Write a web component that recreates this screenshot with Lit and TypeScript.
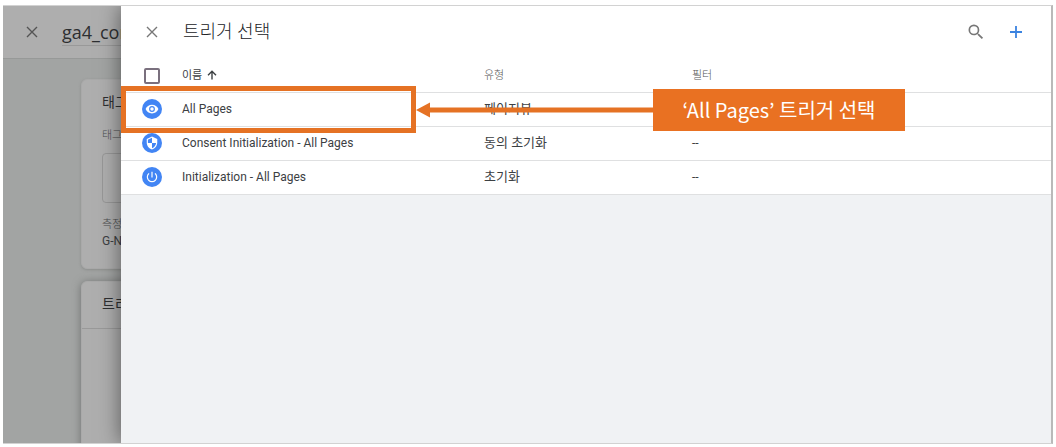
import { LitElement, html, css, svg } from "lit";
import { customElement } from "lit/decorators.js";

interface Trigger {
  name: string;
  type: string;
  filter: string;
  icon: "eye" | "shield" | "power";
}

const TRIGGERS: Trigger[] = [
  { name: "All Pages", type: "페이지뷰", filter: "", icon: "eye" },
  { name: "Consent Initialization - All Pages", type: "동의 초기화", filter: "--", icon: "shield" },
  { name: "Initialization - All Pages", type: "초기화", filter: "--", icon: "power" },
];

const PATHS = {
  eye: svg`<path fill-rule="evenodd" d="M12 4.5C7 4.5 2.7 7.6 1 12c1.7 4.400 6 7.500 11 7.500s9.300-3.100 11-7.500c-1.700-4.400-6-7.500-11-7.500zM12 17a5 5 0 1 1 0-10 5 5 0 0 1 0 10zm0-8a3 3 0 1 0 0 6 3 3 0 0 0 0-6z"/>`,
  shield: svg`<path fill-rule="evenodd" d="M12 1 3 5v6c0 5.550 3.840 10.740 9 12 5.160-1.260 9-6.450 9-12V5l-9-4zm0 10.990h7c-.530 4.120-3.280 7.790-7 8.940V12H5V6.300l7-3.110v8.800z"/>`,
  power: svg`<path d="M13 3h-2v10h2V3zm4.830 2.170-1.420 1.420A6.920 6.920 0 0 1 19 12a7 7 0 1 1-11.420-5.420L6.170 5.170A8.932 8.932 0 0 0 3 12a9 9 0 0 0 18 0c0-2.740-1.230-5.180-3.170-6.830z"/>`,
};

const closeIcon = html`<svg class="close-icon" viewBox="0 0 12 12" aria-hidden="true">
  <path d="M1 1 11 11M11 1 1 11" fill="none" stroke="currentColor" stroke-width="1.400" />
</svg>`;

@customElement("app-root")
export class AppRoot extends LitElement {
  static styles = css`
    :host {
      display: block;
      box-sizing: border-box;
      height: 100vh;
      padding: 5px 3px 3px;
      background: #fff;
      color: #3c4043;
      font-family: Roboto, "Noto Sans CJK KR", sans-serif;
      font-size: 12px;
      line-height: 16px;
    }
    *,
    *::before {
      box-sizing: border-box;
    }
    button {
      display: grid;
      place-items: center;
      width: 24px;
      height: 24px;
      padding: 0;
      border: 0;
      background: none;
      color: #777;
      cursor: pointer;
    }
    .close-icon {
      width: 12px;
      height: 12px;
    }
    .frame {
      position: relative;
      height: 100%;
      overflow: hidden;
      border: 1px solid #d2d2d2;
      border-left: 0;
      border-right: 2px solid #b9b9b9;
      background: #a2a4a3;
    }
    .editor-bar {
      display: flex;
      align-items: center;
      gap: 18px;
      height: 53px;
      padding: 0 17px;
      border-bottom: 1px solid #979998;
      background: #aeaeae;
    }
    .editor-bar button {
      color: #545454;
    }
    .tag-name {
      flex: 1;
      height: 28px;
      padding: 0;
      border: 0;
      border-bottom: 1px solid #999;
      background: none;
      color: #2d2f31;
      font: 18px/24px "Open Sans", sans-serif;
    }
    .cards {
      display: flex;
      flex-direction: column;
      gap: 12px;
      padding: 20px 78px 0;
    }
    .card {
      border: 1px solid #a9a9a9;
      border-radius: 6px;
      background: #aeaeae;
      box-shadow: 0 1px 3px #8b8d8c;
    }
    .tag-card {
      height: 190px;
      padding: 12px 20px;
    }
    .trigger-card {
      height: 240px;
      box-shadow: 0 1px 8px #6f7170;
    }
    .card-title {
      margin: 0;
      font-size: 14px;
      line-height: 20px;
      font-weight: 400;
      color: #2d2f31;
    }
    .trigger-card .card-title {
      padding: 12px 20px 14px;
      border-bottom: 1px solid #999;
    }
    .label {
      font-size: 11px;
      font-weight: 300;
      color: #4b4d4e;
    }
    .tag-card .card-title + .label {
      margin-top: 16px;
    }
    .type-box {
      height: 50px;
      margin: 9px 0 14px;
      border: 1px solid #979797;
      border-radius: 4px;
    }
    .drawer {
      position: absolute;
      inset: 0 0 0 118px;
      background: #f0f2f4;
      box-shadow: 0 0 20px rgba(0, 0, 0, 0.5);
    }
    .drawer-bar {
      display: flex;
      align-items: center;
      gap: 16px;
      height: 52px;
      padding: 0 23px 0 19px;
      background: #fff;
    }
    .drawer-title {
      flex: 1;
      margin: 0 0 0 3px;
      font-size: 18px;
      line-height: 24px;
      font-weight: 300;
      color: #202124;
    }
    .bar-icon {
      width: 20px;
      height: 20px;
    }
    .add {
      color: #3b83e0;
    }
    .list {
      position: relative;
    }
    table {
      width: 100%;
      table-layout: fixed;
      border-collapse: separate;
      border-spacing: 0;
      background: #fff;
    }
    th,
    td {
      height: 34px;
      padding: 0 0 2px;
      border-bottom: 1px solid #dfe0e1;
      text-align: left;
      font-weight: 400;
      white-space: nowrap;
    }
    th {
      height: 35px;
      padding: 2px 0 0;
      font-size: 11px;
      font-weight: 300;
      color: #555;
    }
    th.sorted {
      font-weight: 400;
      color: #3c4043;
    }
    .col-icon {
      width: 61px;
    }
    .col-name {
      width: 302px;
    }
    .col-type {
      width: 208px;
    }
    .pick {
      padding-left: 21px;
    }
    .pick input {
      appearance: none;
      display: block;
      width: 16px;
      height: 16px;
      margin: 0 0 0 2px;
      border: 2px solid #7a707e;
      border-radius: 2px;
      background: #fff;
    }
    .sort {
      width: 10px;
      height: 10px;
      margin-left: 5px;
      vertical-align: -1px;
    }
    .type {
      font-size: 13px;
    }
    .badge {
      display: grid;
      place-items: center;
      width: 20px;
      height: 20px;
      border-radius: 50%;
      background: #4285f4;
    }
    .badge svg {
      width: 14px;
      height: 14px;
      fill: #fff;
    }
    .note {
      position: absolute;
      top: 28px;
      left: 0;
      display: flex;
      align-items: center;
      pointer-events: none;
    }
    .highlight {
      width: 295px;
      height: 47px;
      border: 5px solid #e57224;
    }
    .arrow {
      display: block;
      width: 237px;
      height: 16px;
      fill: #e57224;
    }
    .callout {
      width: 252px;
      background: #e97122;
      color: #fff;
      font: 400 20px/42px "Noto Sans CJK KR", sans-serif;
      text-align: center;
      white-space: nowrap;
    }
  `;

  render() {
    return html`
      <div class="frame">
        <div class="editor">
          <header class="editor-bar">
            <button aria-label="닫기">${closeIcon}</button>
            <input class="tag-name" aria-label="태그 이름" value="ga4_config" />
          </header>
          <div class="cards">
            <section class="card tag-card">
              <h2 class="card-title">태그 구성</h2>
              <div class="label">태그 유형</div>
              <div class="type-box"></div>
              <div class="label">측정 ID</div>
              <div>G-N</div>
            </section>
            <section class="card trigger-card">
              <h2 class="card-title">트리거</h2>
            </section>
          </div>
        </div>

        <main class="drawer">
          <header class="drawer-bar">
            <button aria-label="닫기">${closeIcon}</button>
            <h1 class="drawer-title">트리거 선택</h1>
            <button aria-label="검색">
              <svg class="bar-icon" viewBox="0 0 24 24" fill="currentColor" aria-hidden="true">
                <path
                  d="M15.500 14h-.790l-.280-.270A6.471 6.471 0 0 0 16 9.500 6.500 6.500 0 1 0 9.500 16c1.610 0 3.090-.590 4.230-1.570l.270.280v.790l5 4.990L20.490 19l-4.990-5zm-6 0a4.500 4.500 0 1 1 0-9 4.500 4.500 0 0 1 0 9z"
                />
              </svg>
            </button>
            <button class="add" aria-label="새로 만들기">
              <svg class="bar-icon" viewBox="0 0 20 20" aria-hidden="true">
                <path d="M10 4V16M4 10H16" fill="none" stroke="currentColor" stroke-width="1.800" />
              </svg>
            </button>
          </header>

          <div class="list">
            <table>
              <colgroup>
                <col class="col-icon" />
                <col class="col-name" />
                <col class="col-type" />
                <col />
              </colgroup>
              <thead>
                <tr>
                  <th class="pick"><input type="checkbox" aria-label="모두 선택" /></th>
                  <th class="sorted" aria-sort="ascending">
                    이름<svg class="sort" viewBox="0 0 10 10" aria-hidden="true">
                      <path d="M5 9.500V1.500M1 5.300 5 1.300 9 5.300" fill="none" stroke="currentColor" stroke-width="1.400" />
                    </svg>
                  </th>
                  <th>유형</th>
                  <th>필터</th>
                </tr>
              </thead>
              <tbody>
                ${TRIGGERS.map(
                  (t) => html`<tr>
                    <td class="pick">
                      <span class="badge"><svg viewBox="0 0 24 24" aria-hidden="true">${PATHS[t.icon]}</svg></span>
                    </td>
                    <td>${t.name}</td>
                    <td class="type">${t.type}</td>
                    <td>${t.filter}</td>
                  </tr>`
                )}
              </tbody>
            </table>
            <div class="note">
              <div class="highlight"></div>
              <svg class="arrow" viewBox="0 0 237 16" aria-hidden="true">
                <path d="M0 8 14 .500V5.500H237V10.500H14V15.500z" />
              </svg>
              <div class="callout">‘All Pages’ 트리거 선택</div>
            </div>
          </div>
        </main>
      </div>
    `;
  }
}
